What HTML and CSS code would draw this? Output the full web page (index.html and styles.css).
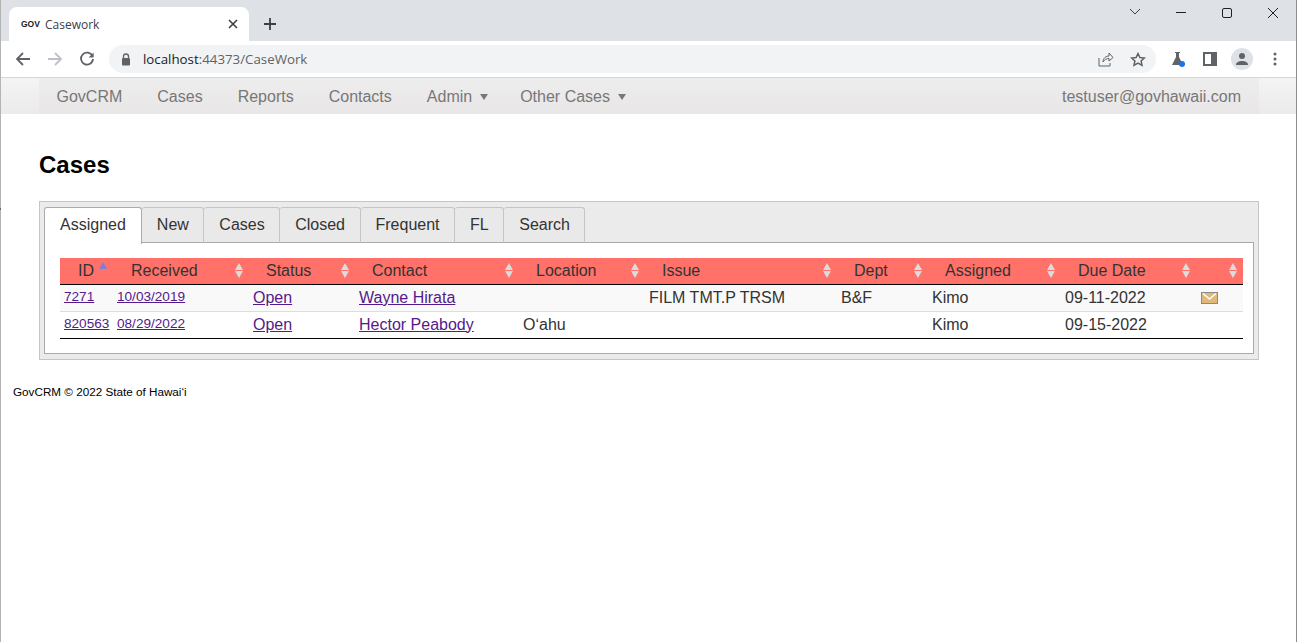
FILE: index.html
```html
<!DOCTYPE html>
<html lang="en">
<head>
<meta charset="utf-8">
<title>Casework</title>
<link rel="stylesheet" href="styles.css">
</head>
<body>
<div class="window">
  <header class="browser">
    <div class="tabstrip">
      <div class="btab">
        <span class="favicon">GOV</span>
        <span class="btab-title">Casework</span>
        <svg class="btab-close" width="10" height="10" viewBox="0 0 10 10"><path d="M1 1l8 8M9 1l-8 8" stroke="#3c4043" stroke-width="1.6" fill="none"/></svg>
      </div>
      <svg class="newtab" width="14" height="14" viewBox="0 0 14 14"><path d="M7 1v12M1 7h12" stroke="#3c4043" stroke-width="1.8" fill="none"/></svg>
      <div class="winctl">
        <svg width="46" height="16" viewBox="0 0 46 16"><path d="M18 4l5 5 5-5" stroke="#3c4043" fill="none"/></svg>
        <svg width="46" height="16" viewBox="0 0 46 16"><path d="M18 7.500h10" stroke="#202124" fill="none"/></svg>
        <svg width="46" height="16" viewBox="0 0 46 16"><rect x="18.500" y="3.500" width="9" height="9" rx="1.500" stroke="#202124" fill="none"/></svg>
        <svg width="46" height="16" viewBox="0 0 46 16"><path d="M18 3l10 10M28 3L18 13" stroke="#202124" fill="none"/></svg>
      </div>
    </div>
    <div class="toolbar">
      <svg class="navbtn" width="16" height="16" viewBox="0 0 16 16"><path d="M15 8H2M8 2L2 8l6 6" stroke="#5f6368" stroke-width="1.8" fill="none"/></svg>
      <svg class="navbtn" width="16" height="16" viewBox="0 0 16 16"><path d="M1 8h13M8 2l6 6-6 6" stroke="#bdc1c6" stroke-width="1.8" fill="none"/></svg>
      <svg class="navbtn" width="16" height="16" viewBox="0 0 16 16"><path d="M13.500 5.200A6 6 0 1 0 14 8" stroke="#5f6368" stroke-width="1.8" fill="none"/><path d="M14.600 1.400v5h-5z" fill="#5f6368"/></svg>
      <div class="omnibox">
        <svg width="10" height="13" viewBox="0 0 10 13"><path d="M2.500 5V3.500a2.500 2.500 0 0 1 5 0V5" stroke="#5f6368" stroke-width="1.300" fill="none"/><rect x="1" y="5" width="8" height="7.500" rx="1" fill="#5f6368"/></svg>
        <span class="url"><span class="host">localhost</span>:44373/CaseWork</span>
        <span class="omni-actions">
          <svg width="16" height="15" viewBox="0 0 16 15"><path d="M1 6v8h11v-3M5 10c0-4 3-6 6-6V1l4 4.500L11 9V6.500C8.500 6.500 6.500 7.500 5 10z" stroke="#5f6368" fill="none"/></svg>
          <svg width="16" height="15" viewBox="0 0 16 15"><path d="M8 1.500l1.900 4 4.400.5-3.200 3 .9 4.300L8 11.100l-4 2.200.9-4.300-3.200-3 4.400-.5z" stroke="#5f6368" stroke-width="1.500" fill="none"/></svg>
        </span>
      </div>
      <div class="ext">
        <svg width="16" height="16" viewBox="0 0 16 16"><path d="M5 1h5v1H9v4l4 8H2l4-8V2H5z" fill="#5f6368"/><circle cx="12" cy="13" r="3" fill="#1a73e8"/></svg>
        <svg width="14" height="14" viewBox="0 0 14 14"><rect width="14" height="14" fill="#5f6368"/><rect x="2" y="2" width="6" height="10" fill="#fff"/></svg>
        <span class="avatar"><svg width="14" height="12" viewBox="0 0 14 12"><circle cx="7" cy="3" r="3" fill="#5f6368"/><path d="M1 12c0-3 3-4 6-4s6 1 6 4z" fill="#5f6368"/></svg></span>
        <svg width="4" height="14" viewBox="0 0 4 14"><circle cx="2" cy="2" r="1.500" fill="#5f6368"/><circle cx="2" cy="7" r="1.500" fill="#5f6368"/><circle cx="2" cy="12" r="1.500" fill="#5f6368"/></svg>
      </div>
    </div>
  </header>

  <nav class="sitenav">
    <div class="sitenav-inner">
      <a class="nav-link">GovCRM</a>
      <a class="nav-link">Cases</a>
      <a class="nav-link">Reports</a>
      <a class="nav-link">Contacts</a>
      <a class="nav-link caret">Admin</a>
      <a class="nav-link caret">Other Cases</a>
      <a class="nav-link user">testuser@govhawaii.com</a>
    </div>
  </nav>

  <main class="content">
    <h1 class="title">Cases</h1>
    <section class="tabs-box">
      <ul class="tabs">
        <li class="tab active">Assigned</li>
        <li class="tab">New</li>
        <li class="tab">Cases</li>
        <li class="tab">Closed</li>
        <li class="tab">Frequent</li>
        <li class="tab">FL</li>
        <li class="tab">Search</li>
      </ul>
      <div class="panel">
        <table class="cases">
          <colgroup>
            <col class="c1"><col class="c2"><col class="c3"><col class="c4"><col class="c5">
            <col class="c6"><col class="c7"><col class="c8"><col class="c9"><col class="c10">
          </colgroup>
          <thead>
            <tr>
              <th><div class="th id">ID<svg class="sort" width="10" height="15" viewBox="0 0 10 15"><path d="M5 0l4 7H1z" fill="#7d80d8"/></svg></div></th>
              <th><div class="th recv">Received<svg class="sort" width="10" height="15" viewBox="0 0 10 15"><path d="M5 0l4 7H1zM5 15l4-7H1z" fill="#dcdcdc"/></svg></div></th>
              <th><div class="th">Status<svg class="sort" width="10" height="15" viewBox="0 0 10 15"><path d="M5 0l4 7H1zM5 15l4-7H1z" fill="#dcdcdc"/></svg></div></th>
              <th><div class="th">Contact<svg class="sort" width="10" height="15" viewBox="0 0 10 15"><path d="M5 0l4 7H1zM5 15l4-7H1z" fill="#dcdcdc"/></svg></div></th>
              <th><div class="th">Location<svg class="sort" width="10" height="15" viewBox="0 0 10 15"><path d="M5 0l4 7H1zM5 15l4-7H1z" fill="#dcdcdc"/></svg></div></th>
              <th><div class="th">Issue<svg class="sort" width="10" height="15" viewBox="0 0 10 15"><path d="M5 0l4 7H1zM5 15l4-7H1z" fill="#dcdcdc"/></svg></div></th>
              <th><div class="th">Dept<svg class="sort" width="10" height="15" viewBox="0 0 10 15"><path d="M5 0l4 7H1zM5 15l4-7H1z" fill="#dcdcdc"/></svg></div></th>
              <th><div class="th">Assigned<svg class="sort" width="10" height="15" viewBox="0 0 10 15"><path d="M5 0l4 7H1zM5 15l4-7H1z" fill="#dcdcdc"/></svg></div></th>
              <th><div class="th">Due Date<svg class="sort" width="10" height="15" viewBox="0 0 10 15"><path d="M5 0l4 7H1zM5 15l4-7H1z" fill="#dcdcdc"/></svg></div></th>
              <th><div class="th"><span></span><svg class="sort" width="10" height="15" viewBox="0 0 10 15"><path d="M5 0l4 7H1zM5 15l4-7H1z" fill="#dcdcdc"/></svg></div></th>
            </tr>
          </thead>
          <tbody>
            <tr class="odd">
              <td><a class="small">7271</a></td>
              <td><a class="small">10/03/2019</a></td>
              <td><a>Open</a></td>
              <td><a>Wayne Hirata</a></td>
              <td></td>
              <td>FILM TMT.P TRSM</td>
              <td>B&amp;F</td>
              <td>Kimo</td>
              <td>09-11-2022</td>
              <td class="mailcell"><svg class="mail" width="17" height="12" viewBox="0 0 17 12"><rect x=".5" y=".5" width="16" height="11" fill="#e0b878" stroke="#8a8a8a"/><path d="M2 1.500l6.500 5.500L15 1.500" stroke="#fff" stroke-width="1.500" fill="none"/></svg></td>
            </tr>
            <tr>
              <td><a class="small">820563</a></td>
              <td><a class="small">08/29/2022</a></td>
              <td><a>Open</a></td>
              <td><a>Hector Peabody</a></td>
              <td>Oʻahu</td>
              <td></td>
              <td></td>
              <td>Kimo</td>
              <td>09-15-2022</td>
              <td></td>
            </tr>
          </tbody>
        </table>
      </div>
    </section>
    <footer class="foot">GovCRM © 2022 State of Hawaiʻi</footer>
  </main>
</div>
</body>
</html>
```

FILE: styles.css
```css
* { box-sizing: border-box; }
html, body { margin: 0; height: 100%; overflow: hidden; }
body { font-family: "Liberation Sans", Arial, sans-serif; background: #fff; color: #333; }
.window { position: relative; height: 642px; border-left: 1px solid #b4b4b4; border-right: 1px solid #8c8c8c; }
.window::before { content: ""; position: absolute; left: -1px; top: 208px; width: 1px; height: 2px; background: #666; }

.browser { height: 78px; font-family: "Open Sans", Roboto, sans-serif; }
.tabstrip { height: 41px; background: #dee1e6; display: flex; align-items: flex-end; padding-left: 8px; }
.btab { width: 240px; height: 34px; background: #fff; border-radius: 8px 8px 0 0; display: flex; align-items: center; padding: 0 10px 0 12px; }
.favicon { width: 24px; font: bold 8.500px "Liberation Sans", sans-serif; color: #222; }
.btab-title { flex: 1; font-size: 12px; color: #3c4043; }
.btab-close { margin-right: 1px; }
.newtab { margin: 0 0 10px 14px; }
.winctl { margin-left: auto; align-self: flex-start; display: flex; padding-top: 5px; }
.toolbar { height: 37px; background: #fff; border-bottom: 1px solid #d5d6d8; display: flex; align-items: center; padding: 0 19px 0 14px; }
.navbtn { margin-right: 16px; }
.omnibox { flex: 1; height: 28px; margin-left: -2px; background: #f1f3f4; border-radius: 14px; display: flex; align-items: center; padding: 0 10px 0 12px; color: #5f6368; }
.url { margin-left: 12px; font-size: 13.300px; }
.host { color: #202124; }
.omni-actions { margin-left: auto; display: flex; gap: 16px; }
.ext { display: flex; align-items: center; margin-left: 14px; gap: 17px; }
.avatar { width: 22px; height: 22px; background: #dee1e6; border-radius: 50%; display: flex; align-items: center; justify-content: center; margin: 0 3px 0 -3px; }

.sitenav { height: 36px; background: linear-gradient(#f4f4f4, #eceaea); }
.sitenav-inner { margin: 0 37px 0 38px; height: 36px; padding: 1px 18px 0 0; display: flex; align-items: center; background: linear-gradient(#eeeded, #e8e6e6); font-size: 16px; color: #777; }
.nav-link { margin: 0 17.500px; }
.nav-link.caret { margin-right: 14.500px; }
.caret::after { content: ""; display: inline-block; width: 0; height: 0; margin-left: 8px; vertical-align: 2px; border: 4.500px solid transparent; border-top: 6px solid #777; border-bottom: 0; }
.nav-link.user { margin-left: auto; margin-right: 0; }

.title { margin: 37px 0 22px 38px; font-size: 24px; line-height: 28px; color: #000; font-weight: bold; }
.tabs-box { margin: 0 37px 0 38px; height: 159px; border: 1px solid #c5c5c5; background: #ecebec; padding: 5px 4px; }
.tabs { list-style: none; margin: 0; padding: 0; display: flex; height: 36px; }
.tab { height: 36px; padding: 0 14.500px 0 15px; line-height: 34px; font-size: 16px; color: #333; background: #e9e9e9; border: 1px solid #c5c5c5; border-left-width: 0; border-bottom: 1px solid #aaa; border-radius: 3px 3px 0 0; }
.tab.active { background: #fff; padding-right: 15px; border: 1px solid #aaa; border-bottom: 0; height: 37px; position: relative; z-index: 1; }
.panel { height: 112px; margin-top: -1px; background: #fff; border: 1px solid #aaa; padding: 15px 9px 0 15px; }

.cases { width: 1183px; table-layout: fixed; border-collapse: collapse; font-size: 16px; color: #333; }
.c1 { width: 53px; } .c2 { width: 136px; } .c3 { width: 106px; } .c4 { width: 164px; } .c5 { width: 126px; }
.c6 { width: 192px; } .c7 { width: 91px; } .c8 { width: 133px; } .c9 { width: 135px; } .c10 { width: 47px; }
.cases th { padding: 0; background: #ff7169; font-weight: normal; text-align: left; border-bottom: 1px solid #000; height: 26px; }
.th { display: flex; justify-content: space-between; align-items: center; height: 25px; padding: 0 5px 0 17px; }
.th.id, .th.recv { padding-left: 18px; }
.sort { flex: none; }
.th.id .sort { margin-bottom: 2px; }
.cases td { padding: 0 4px; height: 27px; border-bottom: 1px solid #ddd; white-space: nowrap; }
.cases tbody tr:last-child td { border-bottom: 1px solid #000; }
.odd td { background: #f9f9f9; }
.cases a { color: #551a8b; text-decoration: underline; }
.cases a.small { font-size: 13.600px; position: relative; top: -2px; }
.mail { display: block; margin-left: 1px; }

.foot { margin: 25px 0 0 12px; font-size: 11.700px; line-height: 14px; color: #000; }
```
